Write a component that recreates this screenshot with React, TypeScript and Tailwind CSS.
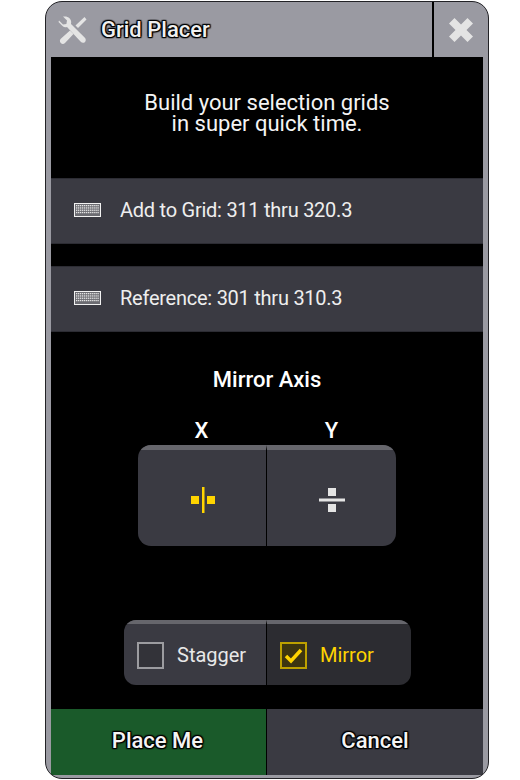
const outline =
  "[text-shadow:0_0_2px_#000,0_0_2px_#000,0_0_2px_#000,1px_1px_1px_#000,-1px_-1px_1px_#000,1px_-1px_1px_#000,-1px_1px_1px_#000]";

function KeyboardIcon() {
  const keys = [];
  for (let r = 0; r < 4; r++) {
    for (let c = 0; c < 12; c++) {
      keys.push(<rect key={`${r}-${c}`} x={2 + c * 1.95} y={2 + r * 2.300} width="1.300" height="1.300" fill="#e4e4e4" />);
    }
  }
  return (
    <svg width="27" height="14" viewBox="0 0 27 14">
      <rect x="0.5" y="0.5" width="26" height="13" fill="#6c6c72" stroke="#f2f2f2" />
      {keys}
    </svg>
  );
}

function ToolsIcon() {
  return (
    <svg width="30" height="30" viewBox="0 0 30 30" fill="#e4e4e4">
      <path d="M1.500 7 5.500 11c1.200 1.200 3 1.500 4.500 1l13.500 14.500c1.400 1.500 3.200 1.700 4.500.4 1.200-1.300 1-3.100-.4-4.500L14 9c.5-2.400 0-4.300-1.500-5.800C11 1.700 8.500 1 6 1.600l4 4-.6 3.400-3.400.6-4-4z" />
      <path d="M27.500 2 29.500 4.500 21 13l-2.500-2.500z" />
      <path d="M13 15.500l3.500 3.500-8.500 9c-1.200 1.200-3 1.200-4.200 0-1.200-1.200-1.200-3 0-4.200z" />
    </svg>
  );
}

function InputRow({ label }: { label: string }) {
  return (
    <div className="flex h-[66px] items-center gap-[19px] border-y border-[#2c2c33] bg-[#3a3a42] pb-[3px] pl-[23px] text-[20px] tracking-[-0.25px] text-[#eeeeee]">
      <KeyboardIcon />
      <span>{label}</span>
    </div>
  );
}

export default function App() {
  return (
    <div className="h-[780px] bg-white pl-[45px] pt-px font-['Roboto',sans-serif]">
      <div className="flex h-[778px] w-[444px] flex-col overflow-hidden rounded-[17px] border border-[#222226] bg-[#9a9aa2] px-[5px] pb-[3px]">
        <div className="-mx-[5px] flex h-[55px] shrink-0 items-center">
          <div className="ml-[11px]">
            <ToolsIcon />
          </div>
          <span className={`ml-[14px] text-[22px] font-medium text-[#f0f0f0] ${outline}`}>Grid Placer</span>
          <div className="ml-auto flex h-full w-[56px] items-center justify-center border-l-2 border-black">
            <svg width="26" height="26" viewBox="0 0 26 26" fill="#e4e4e4">
              <path d="M6.500 1 13 7.500 19.500 1 25 6.500 18.500 13 25 19.500 19.500 25 13 18.500 6.500 25 1 19.500 7.500 13 1 6.500z" />
            </svg>
          </div>
        </div>

        <div className="flex min-h-0 flex-1 flex-col bg-black text-white">
          <div className="pt-[35px] text-center text-[22px] leading-[21px] text-[#f4f4f4]">
            <p>Build your selection grids</p>
            <p>in super quick time.</p>
          </div>
          <div className="mt-[44px] flex flex-col gap-[22px]">
            <InputRow label="Add to Grid: 311 thru 320.3" />
            <InputRow label="Reference: 301 thru 310.3" />
          </div>

          <p className="mt-[35px] text-center text-[22px] font-medium leading-[25px]">Mirror Axis</p>
          <div className="ml-[87px] mt-[26px] flex w-[258px] text-center text-[22px] font-medium leading-[25px]">
            <span className="w-[129px] pr-[2px]">X</span>
            <span className="w-[129px]">Y</span>
          </div>
          <div className="ml-[87px] mt-[2px] flex h-[101px] w-[258px] overflow-hidden rounded-[13px] bg-[#3a3a42]">
            <div className="flex w-[129px] items-center justify-center border-t-[5px] border-r-[1px] border-t-[#66666c] border-r-black pl-[1px] pt-[4px]">
              <svg width="24" height="26" viewBox="0 0 24 26" fill="#ffd400">
                <rect x="0" y="9" width="8" height="8" />
                <rect x="16" y="9" width="8" height="8" />
                <rect x="11" y="0" width="2.500" height="26" />
              </svg>
            </div>
            <div className="flex w-[129px] items-center justify-center border-t-[5px] border-t-[#66666c] pt-[4px]">
              <svg width="26" height="24" viewBox="0 0 26 24" fill="#e4e4e4">
                <rect x="9" y="0" width="8" height="8" />
                <rect x="9" y="16" width="8" height="8" />
                <rect x="0" y="10.500" width="26" height="3" />
              </svg>
            </div>
          </div>

          <div className="ml-[73px] mt-[74px] flex h-[65px] w-[287px] overflow-hidden rounded-[12px] text-[20px]">
            <div className="flex w-[143px] items-center gap-[13px] border-t-[4px] border-r-[1px] border-t-[#66666c] border-r-black bg-[#3a3a42] pl-[13px] text-[#e8e8e8]">
              <div className="h-[27px] w-[27px] translate-y-px border-2 border-[#9c9ca0] bg-[#333339]" />
              <span>Stagger</span>
            </div>
            <div className="flex flex-1 items-center gap-[13px] border-t-[4px] border-t-[#66666c] bg-[#2c2c31] pl-[13px] text-[#ffd400]">
              <div className="flex h-[27px] w-[27px] translate-y-px items-center justify-center border-2 border-[#bda000] bg-[#3d3510]">
                <svg width="19" height="16" viewBox="0 0 19 16" fill="none" stroke="#ffd400" strokeWidth="3.500">
                  <path d="M2 8l5 5L17 2" />
                </svg>
              </div>
              <span>Mirror</span>
            </div>
          </div>

          <div className="mt-auto flex h-[66px] text-[22px] font-medium text-[#f4f4f4]">
            <div className={`flex w-[215px] items-center justify-center bg-[#1a5a2a] pb-[4px] pr-[2px] ${outline}`}>Place Me</div>
            <div className="w-px bg-black" />
            <div className={`flex flex-1 items-center justify-center bg-[#3a3a42] pb-[4px] ${outline}`}>Cancel</div>
          </div>
        </div>
      </div>
    </div>
  );
}
